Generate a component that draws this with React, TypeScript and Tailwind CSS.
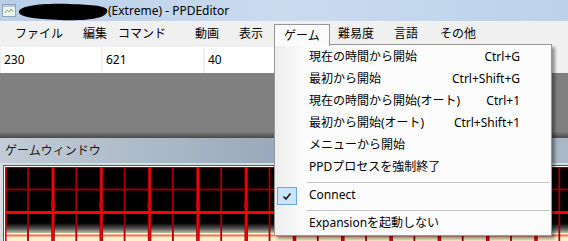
const FONT = "font-['Noto_Sans','Noto_Sans_CJK_JP',sans-serif]";

const menus = [
  { label: "ファイル", w: "w-[68px]" },
  { label: "編集", w: "w-[35px]" },
  { label: "コマンド", w: "w-[77px]" },
  { label: "動画", w: "w-[44px]" },
  { label: "表示", w: "w-[35px]" },
];

const gameItems = [
  { label: "現在の時間から開始", key: "Ctrl+G" },
  { label: "最初から開始", key: "Ctrl+Shift+G" },
  { label: "現在の時間から開始(オート)", key: "Ctrl+1" },
  { label: "最初から開始(オート)", key: "Ctrl+Shift+1" },
  { label: "メニューから開始", key: "" },
  { label: "PPDプロセスを強制終了", key: "" },
];

function TitleBar() {
  return (
    <div className="flex h-[21px] items-center bg-gradient-to-r from-[#b9cfe8] via-[#c9dbef] to-[#bcd2ea]">
      <svg width="108" height="21" viewBox="0 0 108 21" className="shrink-0">
        <rect x="2.5" y="4.5" width="13" height="12" fill="#eef3ee" stroke="#8fa3b0" />
        <rect x="3" y="5" width="12" height="2" fill="#b9c9d6" />
        <path d="M5 13 L7 10 L9 12 L11 9 L13 12" stroke="#7fb07f" fill="none" strokeWidth="1" />
        <path d="M19 12 C19 6 40 3 70 4 C95 5 110 6 107 12 C105 18 90 21 60 20 C35 19 19 17 19 12 Z" fill="#000" />
      </svg>
      <span className="text-[12px] leading-none text-black">(Extreme) - PPDEditor</span>
    </div>
  );
}

function MenuBar() {
  return (
    <div className="flex h-[24px] items-stretch bg-[#f0f0f0] pl-[15px] text-[12px]">
      {menus.map((m) => (
        <div key={m.label} className={`${m.w} flex items-center pt-[2px]`}>
          {m.label}
        </div>
      ))}
      <div className="relative z-20 mt-[3px] mb-[-1px] flex w-[56px] items-center border border-b-0 border-[#979797] bg-[#fbfbfb] pl-[9px]">
        ゲーム
      </div>
      <div className="flex items-center pl-[8px] pt-[2px]">
        <div className="w-[56px]">難易度</div>
        <div className="w-[46px]">言語</div>
        <div>その他</div>
      </div>
    </div>
  );
}

function DataRow() {
  return (
    <div className="flex h-[28px] gap-[2px] bg-[#f0f0f0] pl-[1px] pt-[2px] text-[12px]">
      {["230", "621", "40"].map((v) => (
        <div key={v} className="flex w-[100px] items-center bg-white pl-[3px]">
          {v}
        </div>
      ))}
    </div>
  );
}

function GameCanvas() {
  const thick = Array.from({ length: 12 }, (_, k) => 48 + 48.3 * k);
  const thin = Array.from({ length: 12 }, (_, k) => 23 + 48.3 * k);
  return (
    <svg width="563" height="74" viewBox="0 0 563 74" className="block">
      <defs>
        <linearGradient id="band" x1="0" y1="0" x2="0" y2="1">
          <stop offset="0" stopColor="#000" />
          <stop offset="0.6" stopColor="#5e5e5e" />
          <stop offset="1" stopColor="#b9c3a2" />
        </linearGradient>
      </defs>
      <rect width="563" height="74" fill="#000" />
      <rect y="56" width="563" height="10" fill="url(#band)" />
      <rect y="66" width="563" height="8" fill="#fdf2c6" />
      <line x1="0" y1="68.5" x2="563" y2="68.5" stroke="#f07070" strokeWidth="2" />
      <line x1="0" y1="0.5" x2="563" y2="0.5" stroke="#800000" strokeWidth="1.5" />
      <line x1="0" y1="22.5" x2="563" y2="22.5" stroke="#8c0000" strokeWidth="2" />
      <line x1="0.8" y1="0" x2="0.8" y2="74" stroke="#e00000" strokeWidth="1.6" />
      {thin.map((x) => (
        <line key={`t${x}`} x1={x} y1="0" x2={x} y2="74" stroke="#a80000" strokeWidth="1.8" />
      ))}
      {thick.map((x) => (
        <g key={`k${x}`}>
          <line x1={x} y1="0" x2={x} y2="74" stroke="#9a0000" strokeWidth="3.5" />
          <line x1={x} y1="0" x2={x} y2="74" stroke="#ff0000" strokeWidth="1.8" />
          <rect x={x - 2} y="35" width="4" height="6" fill="#d00000" />
        </g>
      ))}
      <line x1="0" y1="45.5" x2="563" y2="45.5" stroke="#ff0000" strokeWidth="3" />
    </svg>
  );
}

function GameMenu() {
  return (
    <div className="absolute left-[274px] top-[44px] z-10 w-[278px] border border-[#979797] bg-[#fcfcfc] py-[1px] text-[12px] shadow-[3px_3px_3px_rgba(0,0,0,0.4)]">
      <div className="absolute bottom-0 left-0 top-0 w-[30px] bg-gradient-to-r from-[#ededed] to-[#fcfcfc]" />
      <div className="relative">
        {gameItems.map((it) => (
          <div key={it.label} className="flex h-[22px] items-center justify-between pl-[34px] pr-[31px]">
            <span>{it.label}</span>
            <span>{it.key}</span>
          </div>
        ))}
        <div className="ml-[32px] mr-[1px] h-[6px] pt-[4px]">
          <div className="h-[1px] bg-[#c5c5c5]" />
        </div>
        <div className="relative flex h-[22px] items-center pl-[34px]">
          <div className="absolute left-[2px] top-[3px] flex h-[18px] w-[20px] items-center justify-center border border-[#66a7e8] bg-[#cde5fc]">
            <svg width="10" height="9" viewBox="0 0 10 9">
              <path d="M1.5 4.5 L4 7 L8.5 1.5" stroke="#1a1a1a" strokeWidth="1.6" fill="none" />
            </svg>
          </div>
          <span>Connect</span>
        </div>
        <div className="ml-[32px] mr-[1px] h-[6px] pt-[4px]">
          <div className="h-[1px] bg-[#c5c5c5]" />
        </div>
        <div className="flex h-[22px] items-center pl-[34px]">Expansionを起動しない</div>
      </div>
    </div>
  );
}

export default function App() {
  return (
    <div className={`relative h-[241px] w-[568px] overflow-hidden bg-[#808080] text-black ${FONT}`}>
      <TitleBar />
      <MenuBar />
      <DataRow />
      <div className="h-[65px] bg-gradient-to-b from-[#808080] from-[90%] to-[#4a4a4a]" />
      <div className="flex h-[25px] items-center bg-gradient-to-r from-[#c2ccd7] via-[#98a8ba] to-[#aab7c6] pl-[5px] text-[12px] text-[#1a1a1a]">
        ゲームウィンドウ
      </div>
      <div className="bg-[#d6dde5] pl-[3px] pt-[2px]">
        <div className="border-l border-t border-[#5a5a5a]">
          <div className="border-l border-t border-white">
            <GameCanvas />
          </div>
        </div>
      </div>
      <GameMenu />
    </div>
  );
}
